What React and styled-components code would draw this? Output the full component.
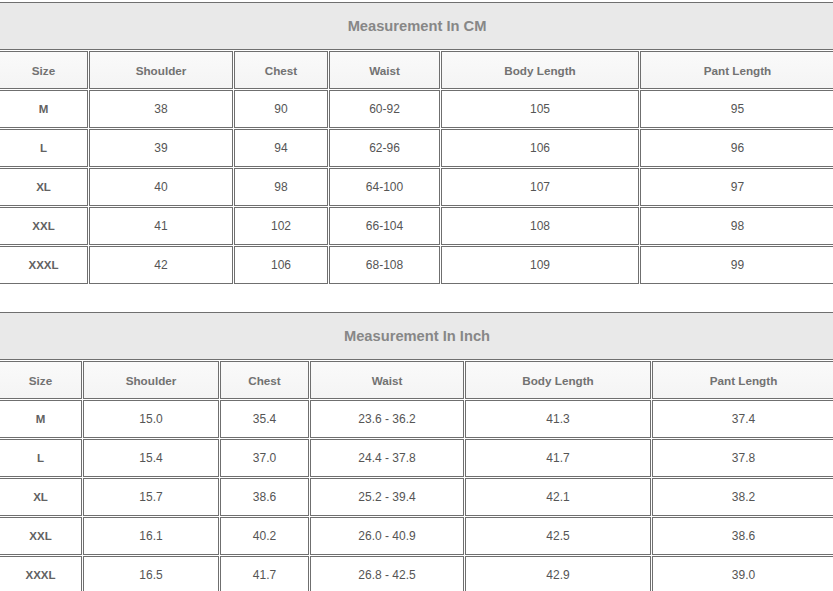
import React from 'react';
import styled, { createGlobalStyle } from 'styled-components';

const GlobalStyle = createGlobalStyle`
  html, body {
    margin: 0;
    padding: 0;
    background: #fff;
    overflow: hidden;
  }
  body {
    font-family: "Liberation Sans", Arial, sans-serif;
  }
`;

const Page = styled.div`
  width: 833px;
  overflow: hidden;
  padding-top: 1px;
`;

const Table = styled.table`
  table-layout: fixed;
  width: 838px;
  margin: 0 0 26px -2px;
  border-collapse: separate;
  border-spacing: 1px;
`;

const Cell = styled.td`
  box-sizing: border-box;
  height: 38px;
  padding: 0;
  border: 1px solid #6f6f6f;
  text-align: center;
  vertical-align: middle;
  background: #fff;
  color: ${(p) => (p.$bold ? '#626262' : '#555')};
  font-size: ${(p) => (p.$bold ? '11.5px' : '12px')};
  font-weight: ${(p) => (p.$bold ? 'bold' : 'normal')};
`;

const HeadCell = styled(Cell)`
  background: linear-gradient(#fafafa, #f4f4f4);
  color: #727272;
  font-size: 11.7px;
  font-weight: bold;
`;

const TitleCell = styled.td`
  box-sizing: border-box;
  height: 48px;
  padding: 0;
  border: 1px solid #6f6f6f;
  background: #e9e9e9;
  text-align: center;
  vertical-align: middle;
  color: #878787;
  font-size: 14.7px;
  font-weight: bold;
`;

const headers = ['Size', 'Shoulder', 'Chest', 'Waist', 'Body Length', 'Pant Length'];

const tables = [
  {
    title: 'Measurement In CM',
    cols: [89, 144, 94, 111, 198, 195],
    rows: [
      ['M', '38', '90', '60-92', '105', '95'],
      ['L', '39', '94', '62-96', '106', '96'],
      ['XL', '40', '98', '64-100', '107', '97'],
      ['XXL', '41', '102', '66-104', '108', '98'],
      ['XXXL', '42', '106', '68-108', '109', '99'],
    ],
  },
  {
    title: 'Measurement In Inch',
    cols: [83, 136, 89, 154, 186, 183],
    rows: [
      ['M', '15.0', '35.4', '23.6 - 36.2', '41.3', '37.4'],
      ['L', '15.4', '37.0', '24.4 - 37.8', '41.7', '37.8'],
      ['XL', '15.7', '38.6', '25.2 - 39.4', '42.1', '38.2'],
      ['XXL', '16.1', '40.2', '26.0 - 40.9', '42.5', '38.6'],
      ['XXXL', '16.5', '41.7', '26.8 - 42.5', '42.9', '39.0'],
    ],
  },
];

function SizeTable({ title, cols, rows }) {
  return (
    <Table>
      <colgroup>
        {cols.map((w, i) => (
          <col key={i} style={{ width: w }} />
        ))}
      </colgroup>
      <tbody>
        <tr>
          <TitleCell colSpan={6}>{title}</TitleCell>
        </tr>
        <tr>
          {headers.map((h) => (
            <HeadCell key={h}>{h}</HeadCell>
          ))}
        </tr>
        {rows.map((r) => (
          <tr key={r[0]}>
            {r.map((v, i) => (
              <Cell key={i} $bold={i === 0}>
                {v}
              </Cell>
            ))}
          </tr>
        ))}
      </tbody>
    </Table>
  );
}

export default function App() {
  return (
    <Page>
      <GlobalStyle />
      {tables.map((t) => (
        <SizeTable key={t.title} {...t} />
      ))}
    </Page>
  );
}
